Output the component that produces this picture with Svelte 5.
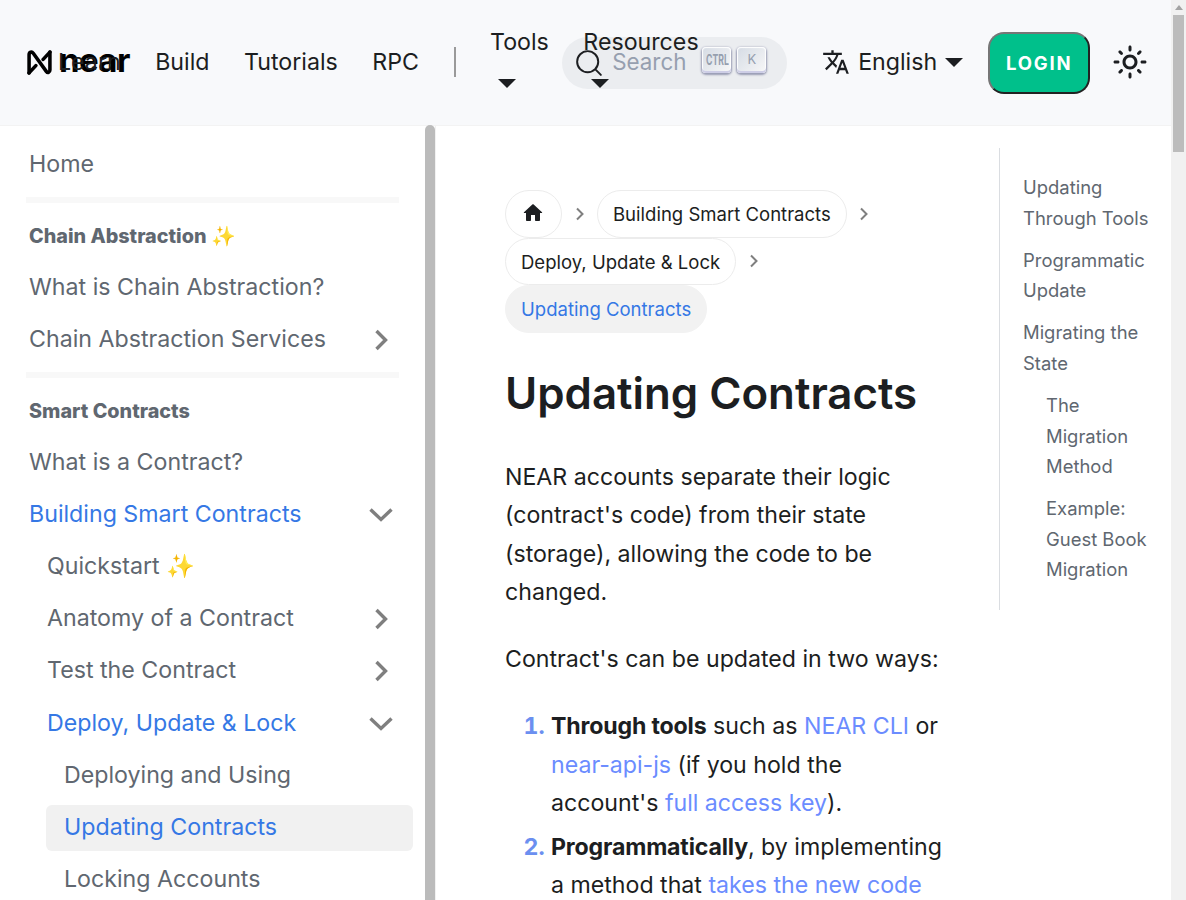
<script>
  const navLinks = ["Build", "Tutorials", "RPC"];

  const sidebar = [
    { label: "Home", level: 0 },
    { divider: true },
    { label: "Chain Abstraction ✨", category: true },
    { label: "What is Chain Abstraction?", level: 0 },
    { label: "Chain Abstraction Services", level: 0, arrow: "right" },
    { divider: true },
    { label: "Smart Contracts", category: true },
    { label: "What is a Contract?", level: 0 },
    { label: "Building Smart Contracts", level: 0, arrow: "down", open: true },
    { label: "Quickstart ✨", level: 1 },
    { label: "Anatomy of a Contract", level: 1, arrow: "right" },
    { label: "Test the Contract", level: 1, arrow: "right" },
    { label: "Deploy, Update & Lock", level: 1, arrow: "down", open: true },
    { label: "Deploying and Using", level: 2 },
    { label: "Updating Contracts", level: 2, open: true, current: true },
    { label: "Locking Accounts", level: 2 }
  ];

  const toc = [
    { label: "Updating Through Tools" },
    { label: "Programmatic Update" },
    { label: "Migrating the State" },
    { label: "The Migration Method", sub: true },
    { label: "Example: Guest Book Migration", sub: true }
  ];
</script>

<div class="page">
  <div class="site">
    <header class="navbar">
      <div class="logo">
        <svg class="logo-mark" viewBox="1 1 24 24" width="25" height="25">
          <path d="M3 23V5.5c0-2.5 2.6-3.2 4-1.4L19.5 21.5c1.4 1.9 3.5 1 3.5-1.2V3" fill="none" stroke="#000" stroke-width="3.4" stroke-linecap="round" stroke-linejoin="round"/>
          <path d="M3 23l6.5-7M23 3l-6.5 7" fill="none" stroke="#000" stroke-width="3.4" stroke-linecap="round"/>
        </svg>
        <span class="wordmark">near</span>
      </div>
      <a class="nav-link" href="#learn">Learn</a>
      {#each navLinks as link}
        <a class="nav-link" href="#x">{link}</a>
      {/each}
      <span class="nav-sep"></span>
      <a class="nav-link dropdown" href="#tools">Tools <span class="caret"></span></a>
      <a class="nav-link dropdown" href="#resources">Resources <span class="caret"></span></a>

      <button class="search">
        <svg viewBox="0 0 20 20" width="28" height="28">
          <path d="M14.386 14.386l4.0877 4.0877-4.0877-4.0877c-2.9418 2.9419-7.7115 2.9419-10.6533 0-2.9419-2.9418-2.9419-7.7115 0-10.6533 2.9418-2.9419 7.7115-2.9419 10.6533 0 2.9419 2.9418 2.9419 7.7115 0 10.6533z" fill="none" stroke="#1c1e21" stroke-width="1.4" stroke-linecap="round" stroke-linejoin="round"/>
        </svg>
        <span class="search-text">Search</span>
        <span class="keys">
          <kbd class="key-ctrl"><span>CTRL</span></kbd>
          <kbd>K</kbd>
        </span>
      </button>

      <a class="nav-link lang" href="#lang">
        <svg viewBox="0 0 24 24" width="28" height="28">
          <path fill="#1c1e21" d="M12.87 15.07l-2.54-2.51.03-.03c1.74-1.94 2.98-4.17 3.71-6.53H17V4h-7V2H8v2H1v1.99h11.17C11.5 7.92 10.44 9.75 9 11.35 8.07 10.32 7.3 9.19 6.69 8h-2c.73 1.63 1.73 3.17 2.98 4.56l-5.09 5.02L4 19l5-5 3.11 3.11.76-2.04zM18.5 10h-2L12 22h2l1.12-3h4.75L21 22h2l-4.5-12zm-2.62 7l1.62-4.33L19.12 17h-3.24z"/>
        </svg>
        <span>English</span>
        <span class="caret"></span>
      </a>
      <button class="login">LOGIN</button>
      <svg class="sun" viewBox="0 0 24 24" width="36" height="36">
        <path fill="#1c1e21" d="M12,9c1.65,0,3,1.35,3,3s-1.35,3-3,3s-3-1.35-3-3S10.35,9,12,9 M12,7c-2.76,0-5,2.24-5,5s2.24,5,5,5s5-2.24,5-5 S14.76,7,12,7L12,7z M2,13l2,0c0.55,0,1-0.45,1-1s-0.45-1-1-1l-2,0c-0.55,0-1,0.45-1,1S1.45,13,2,13z M20,13l2,0c0.55,0,1-0.45,1-1 s-0.45-1-1-1l-2,0c-0.55,0-1,0.45-1,1S19.45,13,20,13z M11,2v2c0,0.55,0.45,1,1,1s1-0.45,1-1V2c0-0.55-0.45-1-1-1S11,1.45,11,2z M11,20v2c0,0.55,0.45,1,1,1s1-0.45,1-1v-2c0-0.55-0.45-1-1-1C11.45,19,11,19.45,11,20z M5.99,4.58c-0.39-0.39-1.03-0.39-1.41,0 c-0.39,0.39-0.39,1.03,0,1.41l1.06,1.06c0.39,0.39,1.03,0.39,1.41,0s0.39-1.03,0-1.41L5.99,4.58z M18.36,16.95 c-0.39-0.39-1.03-0.39-1.41,0c-0.39,0.39-0.39,1.03,0,1.41l1.06,1.06c0.39,0.39,1.03,0.39,1.41,0c0.39-0.39,0.39-1.03,0-1.41 L18.36,16.95z M19.42,5.99c0.39-0.39,0.39-1.03,0-1.41c-0.39-0.39-1.03-0.39-1.41,0l-1.06,1.06c-0.39,0.39-0.39,1.03,0,1.41 s1.03,0.39,1.41,0L19.42,5.99z M7.05,18.36c0.39-0.39,0.39-1.03,0-1.41c-0.39-0.39-1.03-0.39-1.41,0l-1.06,1.06 c-0.39,0.39-0.39,1.03,0,1.41s1.03,0.39,1.41,0L7.05,18.36z"/>
      </svg>
    </header>

    <div class="body">
      <aside class="sidebar">
        <nav class="menu">
          {#each sidebar as item}
            {#if item.divider}
              <div class="divider"></div>
            {:else if item.category}
              <div class="category">{item.label}</div>
            {:else}
              <a href="#doc" class="item level-{item.level}" class:open={item.open} class:current={item.current}>
                <span>{item.label}</span>
                {#if item.arrow === "right"}
                  <svg class="arrow arrow-right" viewBox="0 0 16 24" width="16" height="24"><path d="M3.5 3l9 9-9 9" fill="none" stroke="#7f7f7f" stroke-width="3.4"/></svg>
                {:else if item.arrow === "down"}
                  <svg class="arrow" viewBox="0 0 24 16" width="24" height="16"><path d="M1.5 2.5l10.5 10 10.5-10" fill="none" stroke="#7f7f7f" stroke-width="3.4"/></svg>
                {/if}
              </a>
            {/if}
          {/each}
        </nav>
        <div class="rail"></div>
      </aside>

      <main class="content">
        <div class="doc">
          <nav class="crumbs">
            <span class="crumb-wrap">
              <a href="#home" class="crumb home">
                <svg viewBox="0 0 24 24" width="24" height="24"><path fill="#1c1e21" d="M10 19v-5h4v5c0 .55.45 1 1 1h3c.55 0 1-.45 1-1v-7h1.7c.46 0 .68-.57.33-.87L12.67 3.6c-.38-.34-.96-.34-1.34 0l-8.36 7.53c-.34.3-.13.87.33.87H5v7c0 .55.45 1 1 1h3c.55 0 1-.45 1-1z"/></svg>
              </a>
              <svg class="sep" viewBox="0 0 10 14" width="10" height="14"><path d="M2 1.5L7.5 7 2 12.5" fill="none" stroke="#7f7f7f" stroke-width="2"/></svg>
            </span>
            <span class="crumb-wrap">
              <a href="#b" class="crumb">Building Smart Contracts</a>
              <svg class="sep" viewBox="0 0 10 14" width="10" height="14"><path d="M2 1.5L7.5 7 2 12.5" fill="none" stroke="#7f7f7f" stroke-width="2"/></svg>
            </span>
            <span class="crumb-wrap">
              <a href="#d" class="crumb">Deploy, Update &amp; Lock</a>
              <svg class="sep" viewBox="0 0 10 14" width="10" height="14"><path d="M2 1.5L7.5 7 2 12.5" fill="none" stroke="#7f7f7f" stroke-width="2"/></svg>
            </span>
            <span class="crumb-wrap">
              <span class="crumb active">Updating Contracts</span>
            </span>
          </nav>

          <h1>Updating Contracts</h1>

          <p>NEAR accounts separate their logic (contract's code) from their state (storage), allowing the code to be changed.</p>
          <p>Contract's can be updated in two ways:</p>

          <ol>
            <li><strong>Through tools</strong> such as <a href="#cli">NEAR CLI</a> or <a href="#js">near-api-js</a> (if you hold the account's <a href="#key">full access key</a>).</li>
            <li><strong>Programmatically</strong>, by implementing a method that <a href="#code">takes the new code</a></li>
          </ol>
        </div>

        <aside class="toc">
          <ul>
            {#each toc as entry}
              <li class:sub={entry.sub}><a href="#toc">{entry.label}</a></li>
            {/each}
          </ul>
        </aside>
      </main>
    </div>
  </div>

  <div class="scrollbar">
    <span class="scroll-up"></span>
    <span class="scroll-thumb"></span>
  </div>
</div>

<style>
  :global(body) {
    overflow: hidden;
  }

  .page {
    display: flex;
    width: 1186px;
    height: 900px;
    overflow: hidden;
    font-family: Inter, "Liberation Sans", sans-serif;
    color: #1c1e21;
    background: #fff;
  }

  .site {
    width: 1171px;
    flex: none;
  }

  a {
    text-decoration: none;
    color: inherit;
  }

  /* navbar */
  .navbar {
    display: flex;
    align-items: center;
    height: 126px;
    box-sizing: border-box;
    padding: 0 0 1px 27px;
    background: #f8f9fb;
    border-bottom: 1px solid #f3f3f3;
  }

  .logo {
    display: flex;
    align-items: center;
    gap: 7px;
    width: 102px;
    /* the Learn link runs under the wordmark on this width */
    margin-right: -71px;
    flex: none;
  }

  .logo-mark {
    flex: none;
  }

  .wordmark {
    font-size: 33px;
    font-weight: 650;
    line-height: 1;
    letter-spacing: -0.6px;
    margin-bottom: 4px;
    color: #000;
  }

  .nav-link {
    flex: none;
    font-size: 23.2px;
    line-height: 40px;
    margin-right: 34.5px;
    position: relative;
    z-index: 1;
  }

  .nav-sep {
    width: 2px;
    height: 30px;
    flex: none;
    background: #9a9a9a;
    margin: 0 33.5px 0 1px;
  }

  .dropdown {
    width: min-content;
  }

  .caret {
    display: inline-block;
    width: 0;
    height: 0;
    margin-left: 8px;
    border-top: 9px solid #1c1e21;
    border-left: 9px solid transparent;
    border-right: 9px solid transparent;
    vertical-align: middle;
  }

  .search {
    display: flex;
    align-items: center;
    flex: none;
    width: 225px;
    height: 52px;
    /* pulled back under the Resources dropdown */
    margin: 2px 35px 0 -171px;
    padding: 0 0 0 13px;
    box-sizing: border-box;
    border: 0;
    border-radius: 26px;
    background: #ebedf0;
    font-family: inherit;
  }

  .search-text {
    margin: 0 0 3px 9px;
    font-size: 22.4px;
    color: #969faf;
  }

  .keys {
    display: flex;
    gap: 6px;
    margin-left: 16px;
    margin-bottom: 6px;
  }

  kbd {
    display: flex;
    align-items: center;
    justify-content: center;
    width: 29px;
    height: 26px;
    padding-bottom: 2px;
    box-sizing: border-box;
    border-radius: 4px;
    background: linear-gradient(-225deg, #d5dbe4, #f8f8f8);
    box-shadow: inset 0 -2px 0 0 #cdcde6, inset 0 0 1px 1px #fff, 0 1px 2px 1px rgba(30, 35, 90, 0.4);
    color: #969faf;
    font-family: Inter, sans-serif;
    font-size: 13px;
  }

  .key-ctrl span {
    display: inline-block;
    font-weight: 700;
    font-size: 14px;
    transform: scaleX(0.62);
  }

  .lang {
    display: flex;
    align-items: center;
    gap: 8px;
    margin-right: 25px;
  }

  .lang .caret {
    margin-left: 0;
  }

  .login {
    flex: none;
    width: 102px;
    height: 62px;
    margin-top: 2px;
    border-radius: 16px;
    border-width: 2px;
    border-style: solid;
    border-color: #767676 #222 #222 #767676;
    background: #00c08b;
    color: #fff;
    font-family: inherit;
    font-size: 18.5px;
    font-weight: 700;
    letter-spacing: 1.8px;
  }

  .sun {
    flex: none;
    margin-left: 21.5px;
  }

  /* layout below the bar */
  .body {
    display: flex;
  }

  .sidebar {
    display: flex;
    flex: none;
    width: 436px;
    height: 774px;
    border-right: 1px solid #f1f1f1;
    box-sizing: border-box;
  }

  .menu {
    width: 425px;
    height: 774px;
    overflow: hidden;
    padding: 16px 12px 0 11px;
    box-sizing: border-box;
    flex: none;
  }

  .rail {
    width: 10px;
    height: 775px;
    margin-top: -1px;
    border-radius: 5px 5px 0 0;
    background: #bbb;
    flex: none;
  }

  .item {
    display: flex;
    align-items: center;
    justify-content: space-between;
    box-sizing: border-box;
    height: 46.15px;
    margin-bottom: 6px;
    padding: 0 20px 2px 18px;
    border-radius: 6px;
    font-size: 23.2px;
    color: #606770;
  }

  .level-1 {
    margin-left: 18px;
  }

  .level-2 {
    margin-left: 35px;
  }

  .open {
    color: #3578e5;
  }

  .current {
    background: #f1f1f1;
  }

  .arrow {
    flex: none;
    margin-top: 2px;
  }

  .arrow-right {
    margin-right: 4px;
  }

  .divider {
    height: 6px;
    margin: 9px 14px 0 15px;
    background: #f8f8f8;
  }

  .category {
    padding: 21px 0 16.7px 18px;
    font-size: 19.8px;
    line-height: 24px;
    font-weight: 800;
    color: #606770;
  }

  /* document column */
  .content {
    display: flex;
    flex: 1;
    min-width: 0;
  }

  .doc {
    width: 563px;
    box-sizing: border-box;
    padding: 64px 50px 0 69px;
    flex: none;
    font-size: 23.15px;
    line-height: 38.5px;
  }

  .crumbs {
    display: flex;
    flex-wrap: wrap;
    margin-bottom: 35px;
  }

  .crumb-wrap {
    display: flex;
    align-items: center;
  }

  .crumb {
    display: flex;
    align-items: center;
    height: 47.5px;
    padding: 2px 15px 0;
    box-sizing: border-box;
    border: 1px solid #ececec;
    border-radius: 24px;
    font-size: 18.55px;
    line-height: 1;
  }

  .crumb.home {
    width: 57px;
    justify-content: center;
    padding: 0 2px 1px 0;
  }

  .crumb.active {
    border-color: #f2f2f2;
    background: #f2f2f2;
    color: #3578e5;
  }

  .sep {
    margin: 0 12.5px;
  }

  h1 {
    margin: 0 0 38px;
    font-size: 43.8px;
    line-height: 52px;
    font-weight: 600;
  }

  p {
    margin: 0 0 28.7px;
  }

  strong {
    font-weight: 700;
    letter-spacing: -0.17px;
  }

  ol {
    margin: 0;
    padding: 0 0 0 46px;
  }

  li {
    margin-bottom: 5px;
  }

  ol li::marker {
    color: #6b8ff0;
    font-weight: 700;
  }

  ol a {
    color: #6b8cff;
  }

  /* table of contents */
  .toc {
    flex: none;
    width: 172px;
    padding-top: 22px;
    box-sizing: border-box;
  }

  .toc ul {
    list-style: none;
    margin: 0;
    padding: 24px 14px 20px 23px;
    border-left: 1px solid #dadde1;
    font-size: 18.45px;
    line-height: 30.5px;
    color: #606770;
  }

  .toc li + li {
    margin-top: 11.7px;
  }

  .toc li.sub {
    padding-left: 23px;
  }

  /* page scrollbar */
  .scrollbar {
    flex: none;
    display: flex;
    flex-direction: column;
    align-items: center;
    width: 15px;
    background: #f1f1f1;
  }

  .scroll-up {
    margin-top: 5px;
    width: 0;
    height: 0;
    border-bottom: 5px solid #a3a3a3;
    border-left: 4px solid transparent;
    border-right: 4px solid transparent;
  }

  .scroll-thumb {
    width: 11px;
    height: 137px;
    margin-top: 5px;
    background: #bcbcbc;
  }
</style>
